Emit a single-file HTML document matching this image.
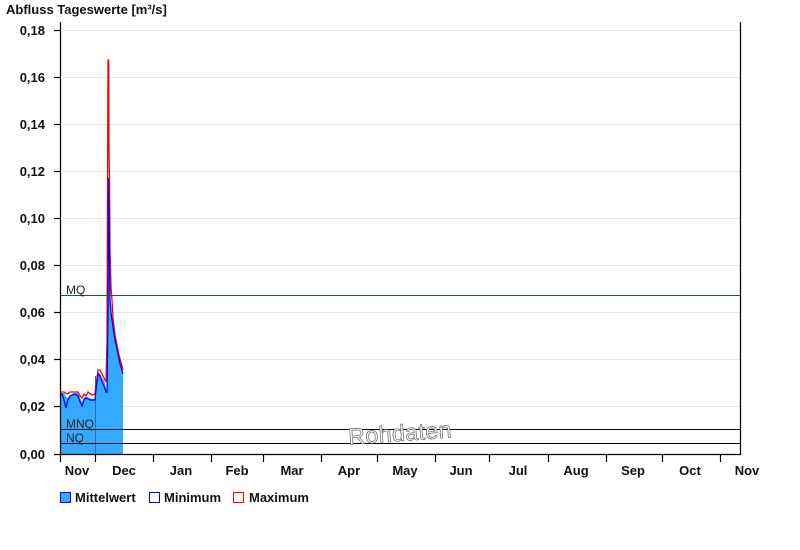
<!DOCTYPE html>
<html><head><meta charset="utf-8"><style>
html,body{margin:0;padding:0;background:#fff;width:800px;height:550px;overflow:hidden}
svg{display:block}
text{font-family:"Liberation Sans",Arial,sans-serif}
.b{font-weight:bold;font-size:13px;fill:#111}
</style></head><body>
<svg width="800" height="550" viewBox="0 0 800 550">
<text x="6" y="14" class="b" font-size="13.5">Abfluss Tageswerte [m³/s]</text>
<g stroke="#e8e8e8" stroke-width="1">
<line x1="60" y1="30.5" x2="740" y2="30.5"/>
<line x1="60" y1="77.5" x2="740" y2="77.5"/>
<line x1="60" y1="124.5" x2="740" y2="124.5"/>
<line x1="60" y1="171.5" x2="740" y2="171.5"/>
<line x1="60" y1="218.5" x2="740" y2="218.5"/>
<line x1="60" y1="265.5" x2="740" y2="265.5"/>
<line x1="60" y1="312.5" x2="740" y2="312.5"/>
<line x1="60" y1="359.5" x2="740" y2="359.5"/>
<line x1="60" y1="406.5" x2="740" y2="406.5"/>
</g>
<polygon fill="#33aaff" points="60,393 64,393 67,398 70,396 73,393 78,393 80,398 82,402 84,397 88,397 92,399 95,399 96,388 97,380 98,372 100,373 102,378 104,380 106,388 107,392 108,360 108,200 109,180 109.5,230 110,290 111,305 112,318 114,330 116,342 118,350 120,360 122,368 123,372 123,454 60,454"/>
<line x1="95.5" y1="376" x2="95.5" y2="454" stroke="#3a6a9a" stroke-width="1"/>
<polyline fill="none" stroke="#ff0000" stroke-width="1.3" points="60,392 64,392 67,394 70,392 78,392 80,396 82,398 84,394 86,396 88,392 92,395 95,394 96,384 97,378 98,370 100,370 102,374 104,378 106,382 107,342 108,60 108.7,60 109,150 109.5,180 110,250 111,287 112,300 113,318 115,335 117,345 119,355 121,362 123,370"/>
<polyline fill="none" stroke="#0000ee" stroke-width="1.2" points="60,394 62,394 64,400 66,408 68,400 70,396 75,394 78,396 80,402 82,406 84,400 86,398 90,400 95,400 96,390 98,374 100,376 102,382 104,386 106,392 107,392 108,320 108.5,178 109,210 109.5,260 110,300 111,312 112,320 114,334 116,345 118,354 120,364 123,374"/>
<line x1="60" y1="295.5" x2="740" y2="295.5" stroke="#2a5a2a" stroke-width="1"/>
<line x1="60" y1="429.5" x2="740" y2="429.5" stroke="#000" stroke-width="1"/>
<line x1="60" y1="443.5" x2="740" y2="443.5" stroke="#000" stroke-width="1"/>
<text x="66" y="294" font-size="12" fill="#222">MQ</text>
<text x="66" y="428" font-size="12" fill="#222">MNQ</text>
<text x="66" y="442" font-size="12" fill="#222">NQ</text>
<text x="348" y="441" font-size="23" letter-spacing="0.5" fill="#fff" stroke="#777" stroke-width="0.8" transform="rotate(-4 400 430)">Rohdaten</text>
<g stroke="#000" stroke-width="1.2">
<line x1="60.5" y1="22" x2="60.5" y2="455"/>
<line x1="740.5" y1="22" x2="740.5" y2="455"/>
<line x1="54" y1="454.5" x2="741" y2="454.5"/>
<line x1="54" y1="30.5" x2="60" y2="30.5"/>
<line x1="54" y1="77.5" x2="60" y2="77.5"/>
<line x1="54" y1="124.5" x2="60" y2="124.5"/>
<line x1="54" y1="171.5" x2="60" y2="171.5"/>
<line x1="54" y1="218.5" x2="60" y2="218.5"/>
<line x1="54" y1="265.5" x2="60" y2="265.5"/>
<line x1="54" y1="312.5" x2="60" y2="312.5"/>
<line x1="54" y1="359.5" x2="60" y2="359.5"/>
<line x1="54" y1="406.5" x2="60" y2="406.5"/>
<line x1="60.5" y1="454" x2="60.5" y2="462"/>
<line x1="95.5" y1="454" x2="95.5" y2="462"/>
<line x1="153.5" y1="454" x2="153.5" y2="462"/>
<line x1="211.5" y1="454" x2="211.5" y2="462"/>
<line x1="263.5" y1="454" x2="263.5" y2="462"/>
<line x1="321.5" y1="454" x2="321.5" y2="462"/>
<line x1="377.5" y1="454" x2="377.5" y2="462"/>
<line x1="435.5" y1="454" x2="435.5" y2="462"/>
<line x1="489.5" y1="454" x2="489.5" y2="462"/>
<line x1="548.5" y1="454" x2="548.5" y2="462"/>
<line x1="606.5" y1="454" x2="606.5" y2="462"/>
<line x1="662.5" y1="454" x2="662.5" y2="462"/>
<line x1="720.5" y1="454" x2="720.5" y2="462"/>
</g>
<g class="b" text-anchor="end">
<text x="45" y="35">0,18</text>
<text x="45" y="82">0,16</text>
<text x="45" y="129">0,14</text>
<text x="45" y="176">0,12</text>
<text x="45" y="223">0,10</text>
<text x="45" y="270">0,08</text>
<text x="45" y="317">0,06</text>
<text x="45" y="364">0,04</text>
<text x="45" y="411">0,02</text>
<text x="45" y="459">0,00</text>
</g>
<g class="b" text-anchor="middle">
<text x="77" y="475">Nov</text>
<text x="124" y="475">Dec</text>
<text x="181" y="475">Jan</text>
<text x="237" y="475">Feb</text>
<text x="292" y="475">Mar</text>
<text x="349" y="475">Apr</text>
<text x="405" y="475">May</text>
<text x="461" y="475">Jun</text>
<text x="518" y="475">Jul</text>
<text x="576" y="475">Aug</text>
<text x="633" y="475">Sep</text>
<text x="690" y="475">Oct</text>
<text x="747" y="475">Nov</text>
</g>
<rect x="60.5" y="492.5" width="10" height="10" fill="#33aaff" stroke="#0000ee"/>
<text x="75" y="502" class="b">Mittelwert</text>
<rect x="149.5" y="492.5" width="10" height="10" fill="#fff" stroke="#0000cc"/>
<text x="164" y="502" class="b">Minimum</text>
<rect x="233.5" y="492.5" width="10" height="10" fill="#fff" stroke="#ff0000"/>
<text x="249" y="502" class="b">Maximum</text>
</svg>
</body></html>
